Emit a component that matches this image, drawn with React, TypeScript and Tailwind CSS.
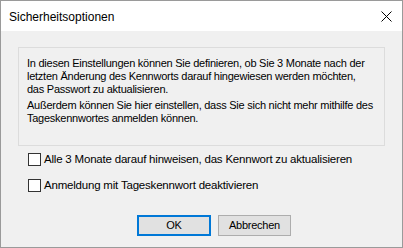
const CheckRow = ({ label }: { label: string }) => (
  <label className="flex items-center h-[13px]">
    <span className="w-[13px] h-[13px] border border-[#333333] bg-white shrink-0" />
    <span className="ml-[3px] leading-[13px] whitespace-nowrap text-[11.5px] tracking-[-0.2px]">{label}</span>
  </label>
);

const App = () => {
  return (
    <div className="w-[403px] h-[248px] bg-[#f0f0f0] border border-[#9a9a9a] flex flex-col text-black font-['Segoe_UI','Liberation_Sans',sans-serif]">
      {/* title bar */}
      <div className="h-[30px] bg-white flex items-center justify-between shrink-0">
        <span className="ml-[8px] mt-[1px] text-[12px]">Sicherheitsoptionen</span>
        <svg width="11" height="11" viewBox="0 0 11 11" className="mr-[10px]">
          <path d="M0.5 0.5 L10.5 10.5 M10.5 0.5 L0.5 10.5" stroke="#000" strokeWidth="1" />
        </svg>
      </div>

      <div className="text-[11px] tracking-[-0.25px] flex flex-col">
        {/* info box */}
        <div className="mx-[17px] mt-[16px] h-[99px] border border-[#dcdcdc] px-[8px] pt-[9px] leading-[13px] whitespace-nowrap">
          <p>
            In diesen Einstellungen können Sie definieren, ob Sie 3 Monate nach der
            <br />
            letzten Änderung des Kennworts darauf hingewiesen werden möchten,
            <br />
            das Passwort zu aktualisieren.
          </p>
          <p className="mt-[3px]">
            Außerdem können Sie hier einstellen, dass Sie sich nicht mehr mithilfe des
            <br />
            Tageskennwortes anmelden können.
          </p>
        </div>

        {/* options */}
        <div className="ml-[27px] mt-[7px] flex flex-col gap-[13px]">
          <CheckRow label="Alle 3 Monate darauf hinweisen, das Kennwort zu aktualisieren" />
          <CheckRow label="Anmeldung mit Tageskennwort deaktivieren" />
        </div>

        {/* buttons */}
        <div className="flex gap-[7px] pl-[136px] mt-[23px]">
          <button className="w-[74px] h-[21px] border-2 border-[#0078d7] bg-[#e1e1e1] leading-none">
            OK
          </button>
          <button className="w-[73px] h-[21px] border border-[#adadad] bg-[#e1e1e1] leading-none">
            Abbrechen
          </button>
        </div>
      </div>
    </div>
  );
};

export default App;
